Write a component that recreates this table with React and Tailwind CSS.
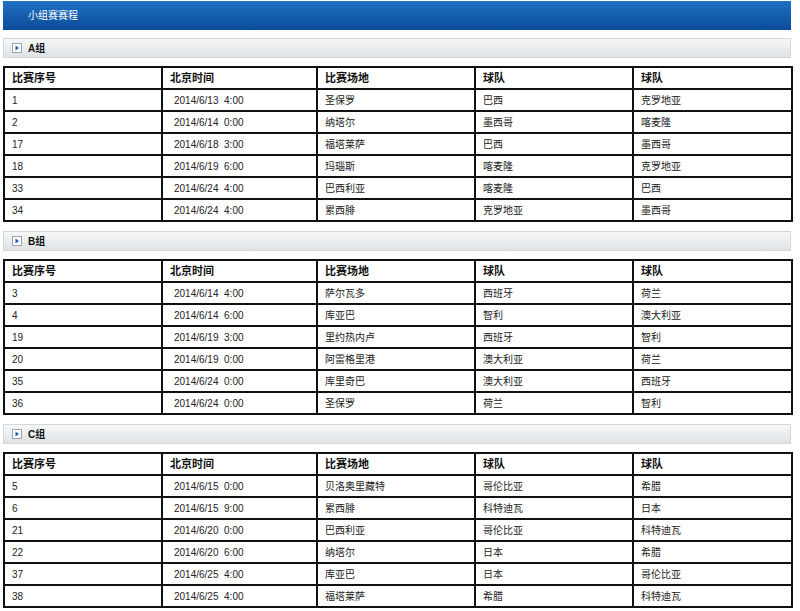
import React from 'react';

const groups = [
  {
    name: 'A组',
    rows: [
      ['1', '2014/6/13 4:00', '圣保罗', '巴西', '克罗地亚'],
      ['2', '2014/6/14 0:00', '纳塔尔', '墨西哥', '喀麦隆'],
      ['17', '2014/6/18 3:00', '福塔莱萨', '巴西', '墨西哥'],
      ['18', '2014/6/19 6:00', '玛瑙斯', '喀麦隆', '克罗地亚'],
      ['33', '2014/6/24 4:00', '巴西利亚', '喀麦隆', '巴西'],
      ['34', '2014/6/24 4:00', '累西腓', '克罗地亚', '墨西哥'],
    ],
  },
  {
    name: 'B组',
    rows: [
      ['3', '2014/6/14 4:00', '萨尔瓦多', '西班牙', '荷兰'],
      ['4', '2014/6/14 6:00', '库亚巴', '智利', '澳大利亚'],
      ['19', '2014/6/19 3:00', '里约热内卢', '西班牙', '智利'],
      ['20', '2014/6/19 0:00', '阿雷格里港', '澳大利亚', '荷兰'],
      ['35', '2014/6/24 0:00', '库里奇巴', '澳大利亚', '西班牙'],
      ['36', '2014/6/24 0:00', '圣保罗', '荷兰', '智利'],
    ],
  },
  {
    name: 'C组',
    rows: [
      ['5', '2014/6/15 0:00', '贝洛奥里藏特', '哥伦比亚', '希腊'],
      ['6', '2014/6/15 9:00', '累西腓', '科特迪瓦', '日本'],
      ['21', '2014/6/20 0:00', '巴西利亚', '哥伦比亚', '科特迪瓦'],
      ['22', '2014/6/20 6:00', '纳塔尔', '日本', '希腊'],
      ['37', '2014/6/25 4:00', '库亚巴', '日本', '哥伦比亚'],
      ['38', '2014/6/25 4:00', '福塔莱萨', '希腊', '科特迪瓦'],
    ],
  },
];

const heads = ['比赛序号', '北京时间', '比赛场地', '球队', '球队'];
const widths = ['w-[158px]', 'w-[155px]', 'w-[158px]', 'w-[158px]', 'w-[159px]'];

function GroupBar({ name }) {
  return (
    <div className="h-[20px] flex items-center border border-[#d4d8dc] bg-gradient-to-b from-[#f6f7f8] to-[#dfe3e6] pl-[8px]">
      <span className="w-[10px] h-[10px] bg-white border border-[#9aa3ab] flex items-center justify-center">
        <svg width="6" height="6" viewBox="0 0 6 6">
          <path d="M1.5 0.5 L5 3 L1.5 5.5 Z" fill="#1a5fb4" />
        </svg>
      </span>
      <span className="ml-[6px] text-[10px] font-bold text-[#111]">{name}</span>
    </div>
  );
}

function GroupTable({ rows }) {
  return (
    <table className="w-[788px] table-fixed border-collapse border-2 border-[#111] text-[10px] text-[#222]">
      <thead>
        <tr className="h-[22px]">
          {heads.map((h, i) => (
            <th key={i} className={`${widths[i]} border-2 border-[#111] text-left font-bold text-[11px] text-[#111] pl-[7px] py-0`}>
              {h}
            </th>
          ))}
        </tr>
      </thead>
      <tbody>
        {rows.map((r, idx) => (
          <tr key={idx} className="h-[22px]">
            {r.map((c, i) => (
              <td key={i} className={`border-2 border-[#111] py-0 ${i === 1 ? 'pl-[11px] whitespace-pre' : 'pl-[7px]'}`}>
                {i === 1 ? c.replace(' ', '  ') : c}
              </td>
            ))}
          </tr>
        ))}
      </tbody>
    </table>
  );
}

export default function App() {
  return (
    <div
      className="w-[800px] h-[611px] bg-white pl-[3px] overflow-hidden"
      style={{ fontFamily: '"Liberation Sans", "Noto Sans CJK SC", sans-serif' }}
    >
      <div className="w-[788px] mt-[1px] h-[29px] flex items-center pl-[25px] bg-gradient-to-b from-[#1f72c3] to-[#0b4b99]">
        <span className="text-white text-[10px]">小组赛赛程</span>
      </div>
      <div className="w-[788px] flex flex-col">
        {groups.map((g, i) => (
          <div key={i} className={i === 0 ? 'mt-[8px]' : 'mt-[9px]'}>
            <GroupBar name={g.name} />
            <div className="mt-[8px]">
              <GroupTable rows={g.rows} />
            </div>
          </div>
        ))}
      </div>
    </div>
  );
}
